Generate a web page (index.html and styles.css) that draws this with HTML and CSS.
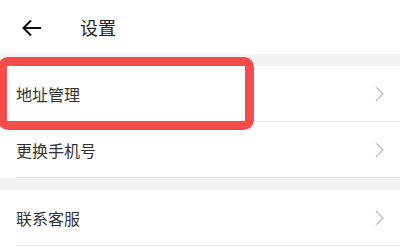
FILE: index.html
```html
<!DOCTYPE html>
<html lang="zh">
<head>
  <meta charset="UTF-8" />
  <meta name="viewport" content="width=device-width, initial-scale=1.0"/>
  <title>设置</title>
  <link rel="stylesheet" href="styles.css">
</head>
<body>
  <div class="header">
    <svg class="back" width="20" height="18" viewBox="0 0 20 18">
      <path d="M19 9H2M9 1.5L1.5 9L9 16.5" fill="none" stroke="#111" stroke-width="2"/>
    </svg>
    <span class="title">设置</span>
  </div>

  <div class="gap"></div>
  <div class="group">
    <div class="item">
      <span>地址管理</span>
      <svg class="arrow" width="9" height="16" viewBox="0 0 9 16"><path d="M1 1l7 7-7 7" fill="none" stroke="#c4c4c4" stroke-width="1.5"/></svg>
    </div>
    <div class="item">
      <span>更换手机号</span>
      <svg class="arrow" width="9" height="16" viewBox="0 0 9 16"><path d="M1 1l7 7-7 7" fill="none" stroke="#c4c4c4" stroke-width="1.5"/></svg>
    </div>
  </div>
  <div class="gap"></div>
  <div class="group">
    <div class="item">
      <span>联系客服</span>
      <svg class="arrow" width="9" height="16" viewBox="0 0 9 16"><path d="M1 1l7 7-7 7" fill="none" stroke="#c4c4c4" stroke-width="1.5"/></svg>
    </div>
  </div>

  <div class="highlight"></div>
</body>
</html>
```
FILE: styles.css
```css
body {
  font-family: "Noto Sans CJK SC", "Noto Sans", sans-serif;
  margin: 0;
  padding: 0;
  background: #fff;
  position: relative;
  width: 400px;
  height: 249px;
  overflow: hidden;
}

.header {
  height: 54px;
  display: flex;
  align-items: center;
  padding-left: 22px;
}

.back {
  display: block;
  margin-top: 2px;
}

.title {
  margin-left: 38px;
  font-size: 18px;
  color: #222;
}

.gap {
  height: 12px;
  background: #f2f2f2;
}

.item {
  height: 55px;
  display: flex;
  align-items: center;
  justify-content: space-between;
  margin-left: 16px;
  padding-right: 16px;
  border-bottom: 1px solid #e4e4e4;
  font-size: 16px;
  color: #333;
}

.highlight {
  position: absolute;
  left: -2px;
  top: 57px;
  width: 238px;
  height: 55px;
  border: 9px solid #f44b4b;
  border-radius: 10px;
}
```
